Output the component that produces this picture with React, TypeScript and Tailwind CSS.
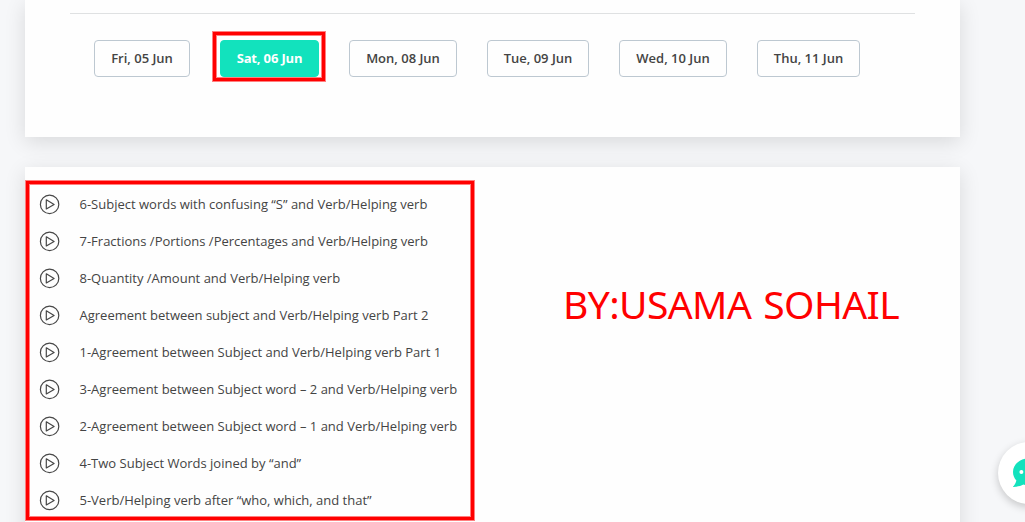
type DateTab = {
  label: string;
  width: string;
};

// ---------------------------------------------------------------------------
// Data
// ---------------------------------------------------------------------------

const DATES: DateTab[] = [
  { label: 'Fri, 05 Jun', width: 'w-[96px]' },
  { label: 'Sat, 06 Jun', width: 'w-[99px]' },
  { label: 'Mon, 08 Jun', width: 'w-[108px]' },
  { label: 'Tue, 09 Jun', width: 'w-[102px]' },
  { label: 'Wed, 10 Jun', width: 'w-[108px]' },
  { label: 'Thu, 11 Jun', width: 'w-[103px]' },
];

const ACTIVE_DATE = 'Sat, 06 Jun';

const LESSONS = [
  '6-Subject words with confusing “S” and Verb/Helping verb',
  '7-Fractions /Portions /Percentages and Verb/Helping verb',
  '8-Quantity /Amount and Verb/Helping verb',
  'Agreement between subject and Verb/Helping verb Part 2',
  '1-Agreement between Subject and Verb/Helping verb Part 1',
  '3-Agreement between Subject word – 2 and Verb/Helping verb',
  '2-Agreement between Subject word – 1 and Verb/Helping verb',
  '4-Two Subject Words joined by “and”',
  '5-Verb/Helping verb after “who, which, and that”',
];

// ---------------------------------------------------------------------------
// Icons
// ---------------------------------------------------------------------------

function PlayIcon() {
  return (
    <svg width="21" height="21" viewBox="0 0 21 21" fill="none" stroke="#474747" strokeWidth="1.2" className="shrink-0">
      <circle cx="10.600" cy="10.400" r="9.200" />
      <path d="M7.300 5.800v9.200l7.800-4.600z" strokeLinejoin="round" />
    </svg>
  );
}

function ChatIcon() {
  return (
    <svg width="34" height="30" viewBox="0 0 34 30" className="shrink-0">
      <path
        d="M17.500.3C8 .3 1 6.200 1 14c0 3.300 1.200 6.200 3.400 8.500-.6 2.600-1.800 4.700-3.600 6.400 4.200.1 7.800-.8 10.700-2.300 1.900.6 3.900.9 6 .9 9.200 0 16-5.700 16-13.500S26.700.3 17.500.3z"
        fill="#12e2bd"
      />
      <circle cx="9.400" cy="14" r="2" fill="#fff" />
      <circle cx="17.500" cy="14" r="2" fill="#fff" />
      <circle cx="25.600" cy="14" r="2" fill="#fff" />
    </svg>
  );
}

// ---------------------------------------------------------------------------
// Page
// ---------------------------------------------------------------------------

export default function App() {
  return (
    <div className="relative h-[522px] w-[1025px] overflow-hidden bg-[#f6f7f9] pl-[25px] font-['Open_Sans',sans-serif] text-[13px] text-[#444]">
      {/* Date picker */}
      <section className="h-[137px] w-[935px] bg-[#fefefe] px-[45px] pt-[13px] shadow-[0_5px_20px_rgba(0,0,0,0.12)]">
        <div className="h-px bg-[#dfe1e2]" />
        <div className="flex gap-[30px] pt-[26px] pl-6">
          {DATES.map(({ label, width }) => {
            const active = label === ACTIVE_DATE;
            return (
              <div key={label} className={`relative shrink-0 ${width}`}>
                <button
                  type="button"
                  className={`h-[37px] w-full rounded-[4px] border text-center whitespace-nowrap ${
                    active
                      ? 'border-[#12e2bd] bg-[#12e2bd] font-bold tracking-[-0.15px] text-white'
                      : 'border-[#bdc8d1] bg-[#fefefe] font-semibold text-[#444]'
                  }`}
                >
                  {label}
                </button>
                {active && (
                  <div className="pointer-events-none absolute -top-[8px] -left-[7px] h-[49px] w-[112px] border-3 border-[#ff0000] shadow-[0_0_0_1px_rgba(255,0,0,0.5),inset_0_0_0_1px_rgba(255,0,0,0.5)]" />
                )}
              </div>
            );
          })}
        </div>
      </section>

      {/* Lessons */}
      <section className="mt-[30px] flex h-[420px] w-[935px] bg-[#fefefe] shadow-[0_5px_20px_rgba(0,0,0,0.12)]">
        <div className="relative w-[450px] shrink-0">
          <ul className="pt-[19px] pl-[14px]">
            {LESSONS.map((lesson) => (
              <li key={lesson} className="flex h-[37px] items-center gap-[19.5px] whitespace-nowrap">
                <PlayIcon />
                <span>{lesson}</span>
              </li>
            ))}
          </ul>
          <div className="pointer-events-none absolute top-[14px] left-px h-[339px] w-[448px] border-3 border-[#ff0000] shadow-[0_0_0_1px_rgba(255,0,0,0.5),inset_0_0_0_1px_rgba(255,0,0,0.5)]" />
        </div>
        <p className="pt-[110px] pl-[88px] font-['Noto_Sans',sans-serif] text-[39px] leading-[54px] tracking-[-0.6px] whitespace-nowrap text-[#ff0000] [word-spacing:2.5px]">
          BY:USAMA SOHAIL
        </p>
      </section>

      {/* Chat launcher */}
      <button
        type="button"
        aria-label="Chat"
        className="absolute top-[442px] left-[998px] flex size-[62px] items-center justify-center rounded-full bg-white shadow-[0_3px_8px_rgba(0,0,0,0.2)]"
      >
        <ChatIcon />
      </button>
    </div>
  );
}
